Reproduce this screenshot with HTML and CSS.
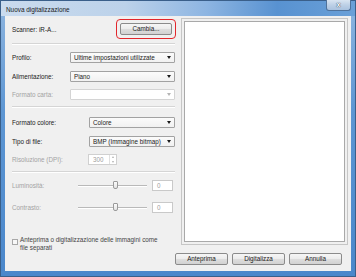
FILE: index.html
```html
<!DOCTYPE html>
<html lang="it">
<head>
<meta charset="utf-8">
<title>Nuova digitalizzazione</title>
<link rel="stylesheet" href="styles.css">
</head>
<body>
<div class="window">
  <div class="titlebar">
    <span class="title">Nuova digitalizzazione</span>
    <div class="close">x</div>
  </div>
  <div class="client">
    <div class="main">
      <div class="left">
        <div class="scanner-row">
          <span>Scanner: iR-A...</span>
          <div class="highlight"><button class="btn btn-cambia">Cambia...</button></div>
        </div>
        <div class="sep sep-1"></div>

        <div class="row row-first g1">
          <span class="lbl">Profilo:</span>
          <div class="combo"><span>Ultime impostazioni utilizzate</span><i class="arrow"></i></div>
        </div>
        <div class="row g1">
          <span class="lbl">Alimentazione:</span>
          <div class="combo"><span>Piano</span><i class="arrow"></i></div>
        </div>
        <div class="row row-short g1">
          <span class="lbl dis">Formato carta:</span>
          <div class="combo combo-dis"><span></span><i class="arrow arrow-dis"></i></div>
        </div>
        <div class="sep sep-2"></div>

        <div class="row row-first2 g2">
          <span class="lbl">Formato colore:</span>
          <div class="combo"><span>Colore</span><i class="arrow"></i></div>
        </div>
        <div class="row g2">
          <span class="lbl">Tipo di file:</span>
          <div class="combo"><span>BMP (Immagine bitmap)</span><i class="arrow"></i></div>
        </div>
        <div class="row row-short g2">
          <span class="lbl lbl-res dis">Risoluzione (DPI):</span>
          <div class="spin"><span>300</span><div class="spin-btns"><i class="up"></i><i class="down"></i></div></div>
        </div>
        <div class="sep sep-3"></div>

        <div class="row row-slider">
          <span class="lbl lbl-s dis">Luminosità:</span>
          <div class="slider"><div class="track"></div><div class="thumb"></div></div>
          <div class="val">0</div>
        </div>
        <div class="row row-slider row-slider2">
          <span class="lbl lbl-s dis">Contrasto:</span>
          <div class="slider"><div class="track"></div><div class="thumb"></div></div>
          <div class="val">0</div>
        </div>

        <div class="check">
          <div class="box"></div>
          <div class="check-text">Anteprima o digitalizzazione delle immagini come<br>file separati</div>
        </div>
      </div>
      <div class="preview"><div class="preview-inner"></div></div>
    </div>
    <div class="actions">
      <button class="btn">Anteprima</button>
      <button class="btn">Digitalizza</button>
      <button class="btn">Annulla</button>
    </div>
  </div>
</div>
</body>
</html>
```

FILE: styles.css
```css
* { box-sizing: border-box; margin: 0; padding: 0; }

html, body {
  width: 356px;
  height: 277px;
  overflow: hidden;
  background: #ffffff;
}

body {
  font-family: "Liberation Sans", Arial, sans-serif;
  font-size: 6.3px;
  color: #1a1a1a;
}

.window {
  width: 356px;
  height: 277px;
  border: 1px solid #3a5f8a;
  background: linear-gradient(180deg, #8fb6e0 0%, #5d96d3 40%, #4a87cb 100%);
  display: flex;
  flex-direction: column;
}

.titlebar {
  height: 15px;
  display: flex;
  align-items: flex-start;
  padding-left: 5px;
  background: linear-gradient(90deg, #cadbee 0%, #bcd2ea 35%, #8db5e2 58%, #5892d1 78%, #6aa0d8 100%);
}

.title {
  margin-top: 5px;
  font-size: 6.4px;
  color: #1a1a1a;
}

.close {
  margin-left: auto;
  margin-right: 4px;
  width: 25px;
  height: 11px;
  margin-top: -1px;
  border: 1px solid #4f729b;
  border-top: none;
  border-radius: 0 0 3px 3px;
  background: linear-gradient(180deg, #d9e5f2 0%, #bdd0e6 50%, #a9c2df 100%);
  color: #ffffff;
  font-weight: bold;
  font-size: 7px;
  line-height: 9px;
  text-align: center;
  text-shadow: 0 0 1px #2c3e55, 0 0 1px #2c3e55;
}

.client {
  margin: 0 4px;
  height: 255px;
  background: #f0f0f0;
  display: flex;
  flex-direction: column;
}

.main {
  display: flex;
  height: 237px;
}

.left {
  width: 173px;
  padding: 3px 2px 0 7px;
  display: flex;
  flex-direction: column;
}

.scanner-row {
  display: flex;
  align-items: center;
  justify-content: space-between;
  height: 20px;
}

.highlight {
  width: 60px;
  height: 20px;
  border: 1.5px solid #e2262b;
  border-radius: 4px;
  padding: 2.5px 2px 2.5px 3px;
}

.btn {
  display: block;
  width: 53px;
  height: 12px;
  border: 1px solid #8b8b8b;
  border-radius: 2px;
  background: linear-gradient(180deg, #f6f6f6 0%, #ececec 48%, #dedede 52%, #d2d2d2 100%);
  font-family: "Liberation Sans", Arial, sans-serif;
  font-size: 6.3px;
  color: #1a1a1a;
  text-align: center;
  line-height: 10px;
}

.btn-cambia { width: 52px; }

.sep {
  height: 2px;
  border-top: 1px solid #d5d5d5;
  border-bottom: 1px solid #ffffff;
  margin-right: 1px;
}
.sep-1 { margin-top: 4px; }
.sep-2 { margin-top: 6px; }
.sep-3 { margin-top: 6px; }

.row {
  display: flex;
  align-items: center;
  height: 11px;
  margin-top: 8px;
}
.row-short { margin-top: 7px; }
.row-first { margin-top: 7px; }
.row-first2 { margin-top: 9px; }

.lbl { flex: none; }
.g1 .lbl { width: 58px; }
.g2 .lbl { width: 77px; }
.g2 .lbl-res { width: 76px; }
.dis { color: #a3a3a3; }

.combo {
  position: relative;
  width: 105px;
  height: 11px;
  border: 1px solid #a2a2a2;
  border-radius: 1px;
  background: linear-gradient(180deg, #fbfbfb 0%, #f1f1f1 100%);
  padding-left: 3px;
  line-height: 9px;
  display: flex;
  align-items: center;
}
.g2 .combo { width: 86px; }

.combo-dis {
  background: #ffffff;
  border-color: #d4d4d4;
}

.arrow {
  margin-left: auto;
  margin-right: 3px;
  width: 0;
  height: 0;
  border-left: 2px solid transparent;
  border-right: 2px solid transparent;
  border-top: 3px solid #1a1a1a;
}
.arrow-dis { border-top-color: #b5b5b5; }

.spin {
  width: 29px;
  height: 11px;
  border: 1px solid #d0d0d0;
  background: #ffffff;
  display: flex;
  align-items: center;
  padding-left: 4px;
  color: #a0a0a0;
}
.spin-btns {
  margin-left: auto;
  width: 7px;
  height: 9px;
  display: flex;
  flex-direction: column;
  justify-content: space-around;
  align-items: center;
  border-left: 1px solid #e0e0e0;
}
.spin-btns .up {
  width: 0; height: 0;
  border-left: 1.5px solid transparent;
  border-right: 1.5px solid transparent;
  border-bottom: 2px solid #b0b0b0;
}
.spin-btns .down {
  width: 0; height: 0;
  border-left: 1.5px solid transparent;
  border-right: 1.5px solid transparent;
  border-top: 2px solid #b0b0b0;
}

.row-slider { margin-top: 7px; }
.row-slider2 { margin-top: 11px; }
.lbl-s { width: 66px; }

.slider {
  position: relative;
  width: 69px;
  height: 11px;
}
.track {
  position: absolute;
  left: 0;
  right: 0;
  top: 5px;
  height: 2px;
  border-top: 1px solid #b9b9b9;
  border-bottom: 1px solid #ffffff;
}
.thumb {
  position: absolute;
  left: 35px;
  top: 1px;
  width: 5px;
  height: 8px;
  border: 1px solid #9a9a9a;
  border-radius: 1px 1px 2px 2px;
  background: linear-gradient(180deg, #fbfbfb, #e4e4e4);
}

.val {
  margin-left: 5px;
  width: 21px;
  height: 11px;
  border: 1px solid #c9c9c9;
  background: #ffffff;
  color: #a0a0a0;
  padding-left: 4px;
  line-height: 9px;
}

.check {
  margin-top: 23px;
  display: flex;
  align-items: flex-start;
}
.box {
  margin-top: 3px;
  width: 6px;
  height: 6px;
  border: 1px solid #a8a8a8;
  background: #f8f8f8;
  flex: none;
}
.check-text {
  margin-left: 2px;
  line-height: 8px;
  color: #444444;
}

.preview {
  margin-left: 3px;
  margin-top: 2px;
  width: 167px;
  height: 227px;
  border: 1px solid #c6c6c6;
  padding: 2px;
  background: #f0f0f0;
}
.preview-inner {
  width: 100%;
  height: 100%;
  border: 1px solid #a9a9a9;
  background: #ffffff;
}

.actions {
  display: flex;
  justify-content: flex-end;
  gap: 4px;
  padding-right: 9px;
  height: 12px;
}
```
